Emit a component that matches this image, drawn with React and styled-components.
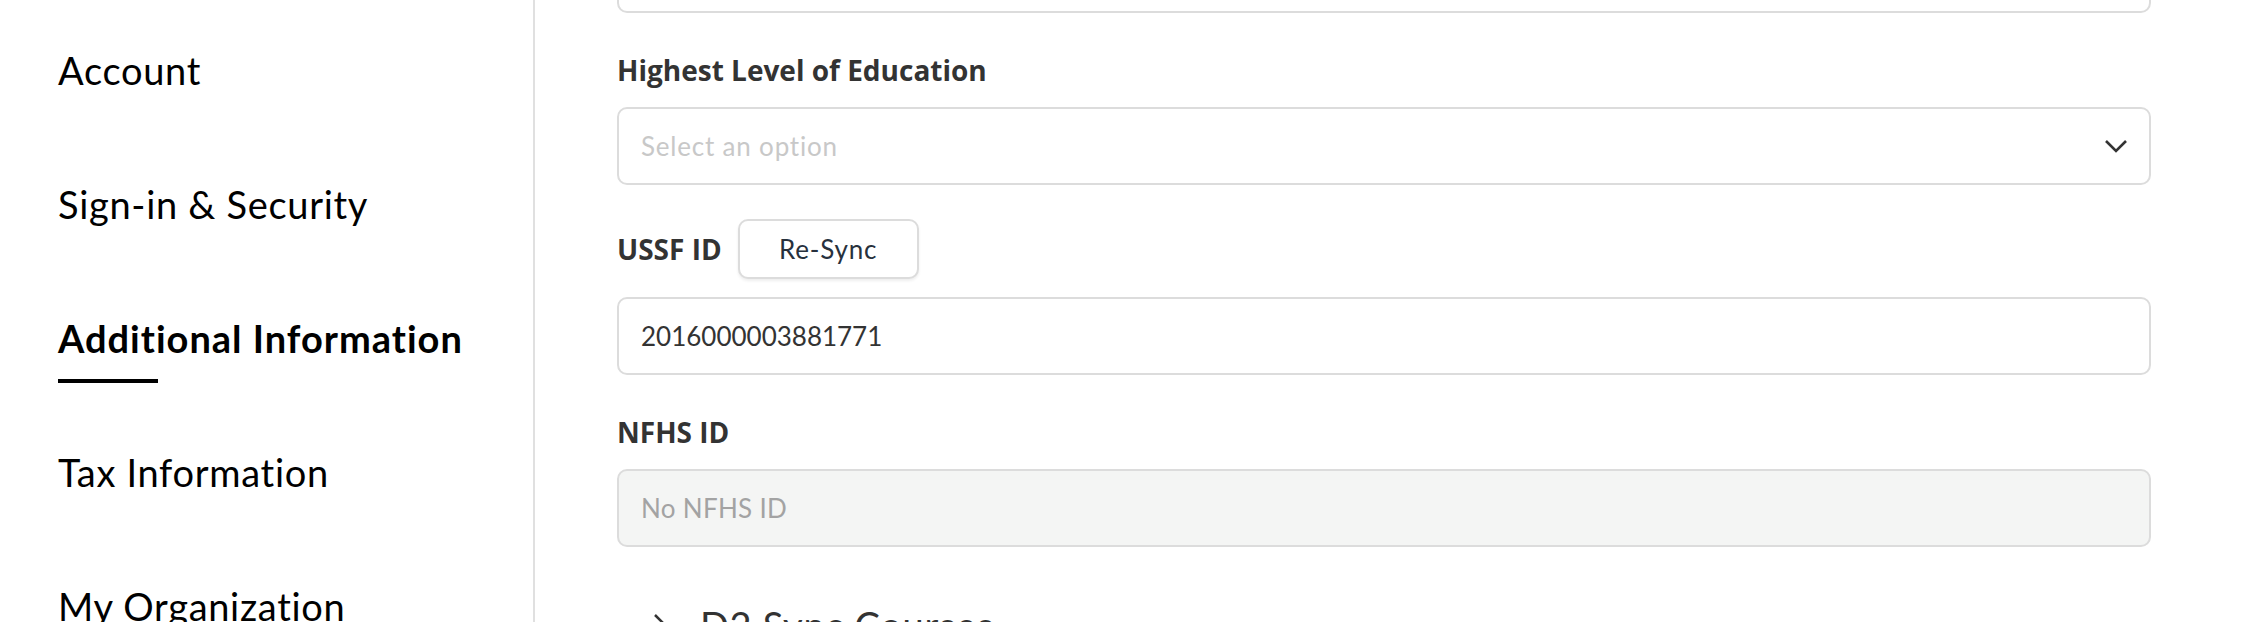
import React from "react";
import styled, { createGlobalStyle } from "styled-components";

const GlobalStyle = createGlobalStyle`
  html, body {
    margin: 0;
    padding: 0;
    background: #fff;
  }
  body {
    font-family: "Lato", "Liberation Sans", sans-serif;
    overflow: hidden;
  }
`;

const Page = styled.div`
  display: flex;
  height: 622px;
  overflow: hidden;
`;

const Sidebar = styled.nav`
  box-sizing: border-box;
  width: 535px;
  flex-shrink: 0;
  padding: 47px 0 0 58px;
  border-right: 2px solid #e0e0e0;
  display: flex;
  flex-direction: column;
  gap: 88px;
`;

const NavItem = styled.a`
  position: relative;
  display: block;
  font-family: "Lato", sans-serif;
  font-size: 38px;
  line-height: 46px;
  color: #000;
  font-weight: ${(p) => (p.$active ? 700 : 400)};
  letter-spacing: ${(p) => (p.$active ? "1px" : "0.7px")};
  text-decoration: none;
  white-space: nowrap;

  &::after {
    content: "";
    display: ${(p) => (p.$active ? "block" : "none")};
    position: absolute;
    left: 0;
    top: 64px;
    width: 100px;
    height: 4px;
    background: #000;
  }
`;

const Main = styled.main`
  flex: 1;
  padding: 0 115px 0 82px;
  min-width: 0;
`;

const Form = styled.div`
  display: flex;
  flex-direction: column;
  margin-top: -65px;
`;

const Field = styled.div`
  display: flex;
  flex-direction: column;
  margin-top: ${(p) => (p.$first ? "0" : "34px")};
`;

const Label = styled.label`
  font-family: "Open Sans", sans-serif;
  font-weight: 700;
  font-size: 28px;
  line-height: 46px;
  color: #333;
  margin-bottom: ${(p) => (p.$inRow ? "0" : "14px")};
`;

const LabelRow = styled.div`
  display: flex;
  align-items: center;
  gap: 16px;
  height: 60px;
  margin-bottom: 18px;
`;

const SyncButton = styled.button`
  box-sizing: border-box;
  width: 181px;
  height: 60px;
  border: 2px solid #dcdcdc;
  border-radius: 10px;
  background: #fff;
  box-shadow: 0 2px 3px rgba(0, 0, 0, 0.07);
  font-family: "Lato", sans-serif;
  font-size: 26px;
  letter-spacing: 0.8px;
  color: #27313d;
  cursor: pointer;
`;

const TextInput = styled.input`
  box-sizing: border-box;
  width: 100%;
  height: 78px;
  border: 2px solid #dcdcdc;
  border-radius: 10px;
  padding: 0 22px;
  font-family: "Lato", sans-serif;
  font-size: 26px;
  color: #333;
  background: ${(p) => (p.disabled ? "#f4f5f4" : "#fff")};
  outline: none;

  &::placeholder {
    color: #a3a3a3;
    letter-spacing: 0.3px;
  }
`;

const SelectBox = styled.div`
  box-sizing: border-box;
  height: 78px;
  border: 2px solid #dcdcdc;
  border-radius: 10px;
  padding: 0 21px 0 22px;
  display: flex;
  align-items: center;
  justify-content: space-between;
  font-family: "Lato", sans-serif;
  font-size: 26px;
  letter-spacing: 0.8px;
  color: #c8c8c8;
`;

const Section = styled.div`
  display: flex;
  align-items: center;
  gap: 32px;
  margin-top: 55px;
  padding-left: 35px;
  font-family: "Lato", sans-serif;
  font-size: 38px;
  line-height: 46px;
  letter-spacing: 0.7px;
  color: #333;
`;

function Chevron({ dir = "down" }) {
  if (dir === "right") {
    return (
      <svg width="16" height="26" viewBox="0 0 16 26" fill="none">
        <path d="M3 3 L13 13 L3 23" stroke="#333" strokeWidth="2.5" />
      </svg>
    );
  }
  return (
    <svg width="24" height="14" viewBox="0 0 24 14" fill="none">
      <path d="M2 2 L12 12 L22 2" stroke="#333" strokeWidth="2.6" />
    </svg>
  );
}

const navItems = [
  "Account",
  "Sign-in & Security",
  "Additional Information",
  "Tax Information",
  "My Organization",
];

export default function App() {
  return (
    <>
      <GlobalStyle />
      <Page>
        <Sidebar>
          {navItems.map((item) => (
            <NavItem key={item} $active={item === "Additional Information"}>
              {item}
            </NavItem>
          ))}
        </Sidebar>
        <Main>
          <Form>
            <Field $first>
              <TextInput readOnly defaultValue="" />
            </Field>

            <Field>
              <Label>Highest Level of Education</Label>
              <SelectBox>
                <span>Select an option</span>
                <Chevron />
              </SelectBox>
            </Field>

            <Field>
              <LabelRow>
                <Label $inRow>USSF ID</Label>
                <SyncButton>Re-Sync</SyncButton>
              </LabelRow>
              <TextInput readOnly defaultValue="2016000003881771" />
            </Field>

            <Field>
              <Label>NFHS ID</Label>
              <TextInput disabled placeholder="No NFHS ID" />
            </Field>

            <Section>
              <Chevron dir="right" />
              <span>D2 Sync Courses</span>
            </Section>
          </Form>
        </Main>
      </Page>
    </>
  );
}
